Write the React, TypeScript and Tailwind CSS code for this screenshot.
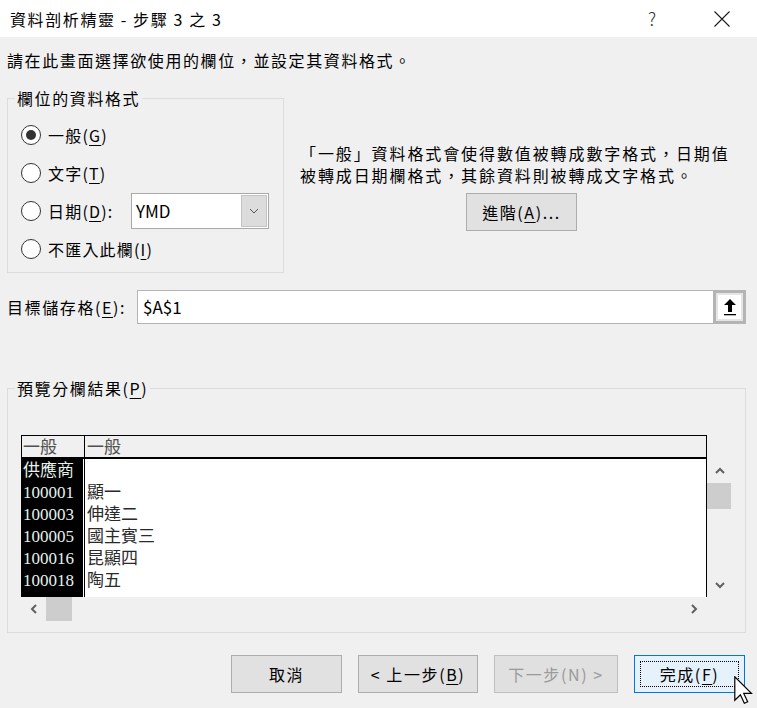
import React from 'react';

const uiFont = "font-['Noto_Sans_CJK_TC','Noto_Sans',sans-serif]";
const gridFont = "font-['Liberation_Serif','Noto_Sans_CJK_TC',serif]";

function Radio({ checked = false }: { checked?: boolean }) {
  return (
    <span className="flex h-[20px] w-[20px] shrink-0 items-center justify-center rounded-full border border-[#333] bg-white">
      {checked && <span className="h-[10px] w-[10px] rounded-full bg-[#333]" />}
    </span>
  );
}

function Key({ k }: { k: string }) {
  return <span className="underline underline-offset-[3px] decoration-1">{k}</span>;
}

function Chevron({ dir }: { dir: 'up' | 'down' | 'left' | 'right' }) {
  const paths = {
    up: 'M1 6 L5 2 L9 6',
    down: 'M1 2 L5 6 L9 2',
    left: 'M6 1 L2 5 L6 9',
    right: 'M2 1 L6 5 L2 9',
  };
  const vertical = dir === 'up' || dir === 'down';
  return (
    <svg width={vertical ? 10 : 8} height={vertical ? 8 : 10} viewBox={vertical ? '0 0 10 8' : '0 0 8 10'}>
      <path d={paths[dir]} fill="none" stroke="#606060" strokeWidth="2" />
    </svg>
  );
}

function Button({
  children,
  width,
  variant = 'normal',
}: {
  children: React.ReactNode;
  width: string;
  variant?: 'normal' | 'disabled' | 'default';
}) {
  if (variant === 'default') {
    return (
      <button className={`${width} h-[38px] border border-[#0078d7] bg-[#e5f1fb] p-[5px]`}>
        <span className="flex h-full w-full items-center justify-center border border-dotted border-black tracking-[1.6px]">
          {children}
        </span>
      </button>
    );
  }
  const look =
    variant === 'disabled'
      ? 'border-[#bfbfbf] bg-[#e0e0e0] text-[#9a9a9a]'
      : 'border-[#adadad] bg-[#e1e1e1] text-black';
  return (
    <button className={`${width} flex h-[38px] items-center justify-center border tracking-[1.6px] ${look}`}>
      {children}
    </button>
  );
}

const rows = [
  ['供應商', ''],
  ['100001', '顯一'],
  ['100003', '伸達二'],
  ['100005', '國主賓三'],
  ['100016', '昆顯四'],
  ['100018', '陶五'],
];

export default function App() {
  return (
    <div className={`relative h-[708px] w-[757px] overflow-hidden bg-[#f0f0f0] text-[16px] text-black ${uiFont}`}>
      {/* title bar */}
      <div className="flex h-[37px] items-center bg-white pl-[10px]">
        <span className="tracking-[1.6px]">資料剖析精靈 - 步驟 3 之 3</span>
        <span className="ml-auto mr-[58px] text-[18px] font-light text-[#333]">?</span>
        <svg width="16" height="16" viewBox="0 0 16 16" className="mr-[27px]">
          <path d="M0.5 0.5 L15.5 15.5 M15.5 0.5 L0.5 15.5" stroke="#1a1a1a" strokeWidth="1.1" />
        </svg>
      </div>

      <div className="px-[7px]">
        <p className="mt-[12px] leading-[22px] tracking-[1.6px]">請在此畫面選擇欲使用的欄位，並設定其資料格式。</p>

        <div className="mt-[16px] flex">
          <fieldset className="h-[186px] w-[277px] border border-[#dcdcdc]">
            <legend className="ml-[7px] px-[2px] leading-[22px] tracking-[1.6px]">欄位的資料格式</legend>
            <div className="flex flex-col pl-[13px] pt-[7px] tracking-[1.2px]">
              <label className="flex h-[38px] items-center gap-[7px]">
                <Radio checked />
                <span>一般(<Key k="G" />)</span>
              </label>
              <label className="flex h-[38px] items-center gap-[7px]">
                <Radio />
                <span>文字(<Key k="T" />)</span>
              </label>
              <div className="flex h-[38px] items-center">
                <label className="flex w-[110px] items-center gap-[7px]">
                  <Radio />
                  <span>日期(<Key k="D" />):</span>
                </label>
                <div className="flex h-[36px] w-[138px] items-center border border-[#a9a9a9] bg-white p-[1px] pl-[4px]">
                  <span className="flex-1 text-[17px] tracking-normal">YMD</span>
                  <span className="flex h-full w-[26px] items-center justify-center border border-[#c4c4c4] bg-[#dcdcdc]">
                    <svg width="10" height="6" viewBox="0 0 10 6">
                      <path d="M1 1 L5 5 L9 1" fill="none" stroke="#555" strokeWidth="1" />
                    </svg>
                  </span>
                </div>
              </div>
              <label className="flex h-[38px] items-center gap-[7px]">
                <Radio />
                <span>不匯入此欄(<Key k="I" />)</span>
              </label>
            </div>
          </fieldset>

          <div className="flex flex-1 flex-col items-start pl-[16px] pt-[55px]">
            <p className="leading-[22px] tracking-[1.9px]">
              「一般」資料格式會使得數值被轉成數字格式，日期值
              <br />
              被轉成日期欄格式，其餘資料則被轉成文字格式。
            </p>
            <div className="ml-[166px] mt-[7px]">
              <Button width="w-[111px]">
                進階(<Key k="A" />)...
              </Button>
            </div>
          </div>
        </div>

        {/* destination */}
        <div className="mt-[17px] flex h-[34px] items-center">
          <span className="w-[130px] tracking-[1.6px]">
            目標儲存格(<Key k="E" />):
          </span>
          <div className="flex h-[34px] w-[609px] items-stretch border border-[#b4b4b4] bg-white">
            <span className="flex flex-1 items-center pl-[5px] text-[17px]">$A$1</span>
            <span className="-my-[1px] -mr-[1px] w-[33px] border-[3px] border-[#b4b4b4] bg-[#e5e5e5] p-[2px]">
              <span className="flex h-full w-full items-center justify-center bg-white">
                <svg width="14" height="18" viewBox="0 0 14 18">
                  <path d="M7 1 L13 7 L9 7 L9 14 L5 14 L5 7 L1 7 Z" fill="#000" />
                  <rect x="1" y="16" width="12" height="1.3" fill="#000" />
                </svg>
              </span>
            </span>
          </div>
        </div>

        {/* preview */}
        <fieldset className="mt-[53px] w-[739px] border border-[#dcdcdc]">
          <legend className="ml-[7px] px-[2px] leading-[22px] tracking-[1.6px]">
            預覽分欄結果(<Key k="P" />)
          </legend>
          <div className="pb-[11px] pl-[13px] pt-[36px]">
            <div className="flex">
              <div className={`w-[686px] border-x border-t border-black ${gridFont} text-[17px]`}>
                <div className="flex h-[23px] border-b-2 border-black bg-[#f0f0f0] leading-[23px] text-[#505050]">
                  <div className="w-[62px] pl-[1px]">一般</div>
                  <div className="flex-1 border-l border-black pl-[2px]">一般</div>
                </div>
                <div className="flex h-[138px] bg-white">
                  <div className="w-[61px] bg-black pl-[1px] pt-[1px] leading-[22px] text-[#e4f2ec]">
                    {rows.map((r) => (
                      <div key={r[0]}>{r[0]}</div>
                    ))}
                  </div>
                  <div className="ml-[1px] flex-1 border-l border-black pl-[2px] pt-[1px] leading-[22px] text-[#2a2a2a]">
                    {rows.map((r) => (
                      <div key={r[0]} className="h-[22px]">
                        {r[1]}
                      </div>
                    ))}
                  </div>
                </div>
              </div>
              <div className="mt-[24px] flex h-[138px] w-[26px] flex-col">
                <div className="flex h-[24px] items-center justify-center">
                  <Chevron dir="up" />
                </div>
                <div className="h-[26px] w-[24px] bg-[#cdcdcd]" />
                <div className="flex-1" />
                <div className="flex h-[24px] items-center justify-center">
                  <Chevron dir="down" />
                </div>
              </div>
            </div>
            <div className="flex h-[24px] w-[686px]">
              <div className="flex w-[25px] items-center justify-center">
                <Chevron dir="left" />
              </div>
              <div className="w-[26px] bg-[#cdcdcd]" />
              <div className="flex-1" />
              <div className="flex w-[26px] items-center justify-center">
                <Chevron dir="right" />
              </div>
            </div>
          </div>
        </fieldset>

        {/* wizard buttons */}
        <div className="mr-[5px] mt-[22px] flex justify-end gap-[16px]">
          <Button width="w-[111px]">取消</Button>
          <Button width="w-[120px]">
            &lt; 上一步(<Key k="B" />)
          </Button>
          <Button width="w-[124px]" variant="disabled">
            下一步(N) &gt;
          </Button>
          <Button width="w-[111px]" variant="default">
            完成(<Key k="F" />)
          </Button>
        </div>
      </div>

      {/* mouse pointer */}
      <svg className="absolute left-[734px] top-[676px]" width="19" height="28" viewBox="0 0 12.5 18.5">
        <path
          d="M0.5 0.5 L0.5 16 L4.2 12.4 L6.8 18 L9 17 L6.4 11.5 L11.5 11.5 Z"
          fill="#fff"
          stroke="#000"
          strokeWidth="0.8"
          strokeLinejoin="miter"
        />
      </svg>
    </div>
  );
}
